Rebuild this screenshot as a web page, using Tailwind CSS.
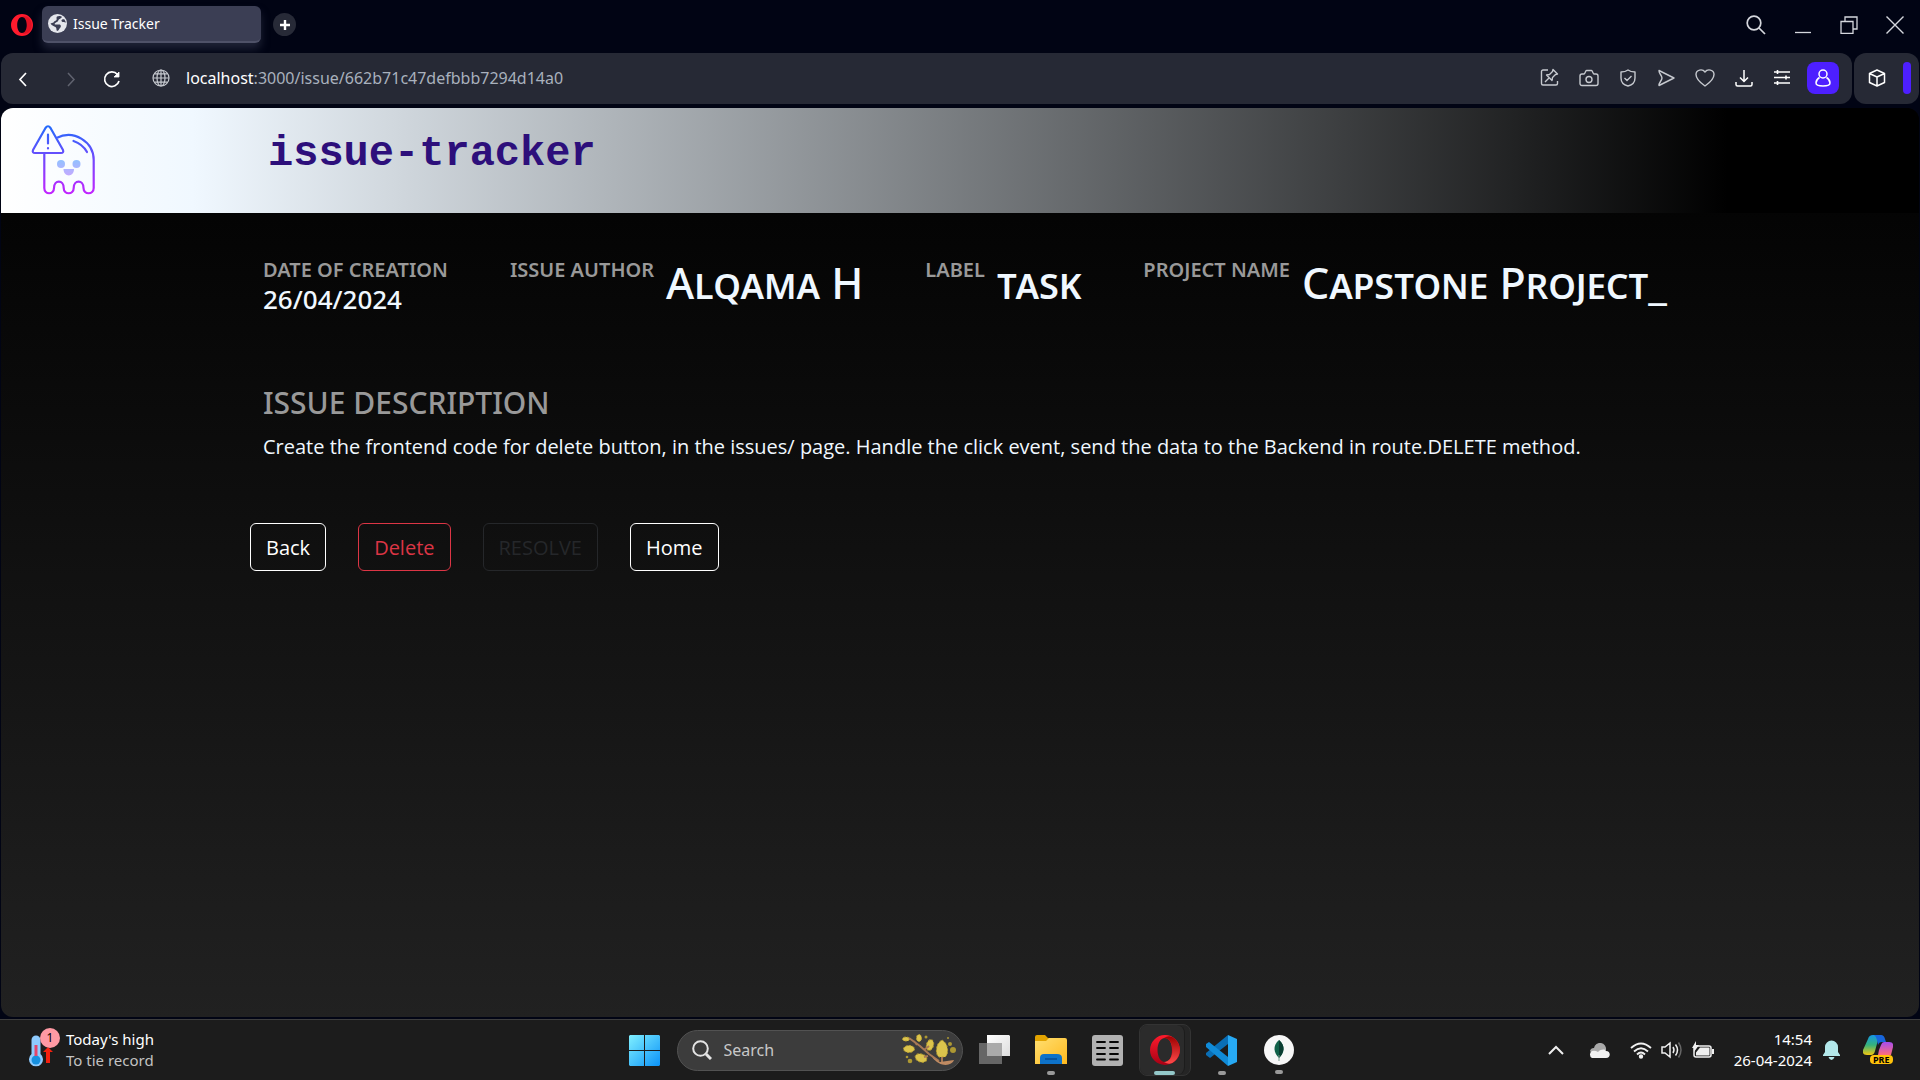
<!DOCTYPE html>
<html lang="en">
<head>
<meta charset="utf-8">
<title>Issue Tracker</title>
<script src="https://cdn.jsdelivr.net/npm/@tailwindcss/browser@4"></script>
</head>
<body class="flex h-screen flex-col overflow-hidden bg-[#010414] font-['Noto_Sans',sans-serif] text-white">

<!-- Tab strip -->
<div class="flex h-[53px] shrink-0 items-center pr-4 pb-1 pl-[11px]">
  <svg class="mr-[9px] size-[22px]" viewBox="0 0 22 22"><path fill="#ff1b2d" fill-rule="evenodd" d="M11 0a11 11 0 1 0 0 22 11 11 0 0 0 0-22Zm0 3c2.800 0 4.800 3.500 4.800 8s-2 8-4.800 8-4.800-3.500-4.800-8 2-8 4.800-8Z"/><path fill="#a70014" d="M11 3c3-2 7 0 8.500 3a11 11 0 0 1 0 10c-1.500 3-5.500 5-8.500 3 2.800 0 4.800-3.500 4.800-8s-2-8-4.800-8Z" opacity=".35"/></svg>
  <div class="flex h-[37px] w-[219px] items-center gap-1.5 rounded-md border-b-2 border-[#4f5268] bg-[#3b3e54] px-1.5 shadow-[0_6px_8px_#3b3e5488]">
    <svg class="size-[19px]" viewBox="0 0 19 19"><circle cx="9.500" cy="9.500" r="9.500" fill="#e4e6ec"/><path fill="#3b3e54" d="M9 2.500c2-1 4-.5 5 .5-1 2-3 1.500-3.500 3S9 8 8 8.500 6 10 7 10.500h4c2 0 2.500 2 1 3.500s-1 2.500-3 3c-1-1 0-3-1.500-4S4 12 2.500 9.500l3-1C6 7 8 7 8.500 6S8 3.500 9 2.500zM18 8.500c-2-.5-4 0-4.500-1.500s2-2 3-1.500z"/></svg>
    <span class="text-sm">Issue Tracker</span>
  </div>
  <button class="ml-3 grid size-[23px] place-items-center rounded-full bg-[#272a37]" aria-label="New tab"><svg class="size-3" viewBox="0 0 12 12"><path stroke="#fff" stroke-width="2.400" d="M6 1v10M1 6h10"/></svg></button>
  <div class="ml-auto flex items-center gap-7 text-[#d5d7dd]">
    <button aria-label="Search tabs"><svg class="size-5" viewBox="0 0 20 20" fill="none" stroke="currentColor" stroke-width="1.700"><circle cx="8" cy="8" r="6.800"/><path d="m13 13 6 6"/></svg></button>
    <button aria-label="Minimize"><svg class="h-5 w-[18px]" viewBox="0 0 18 20"><path stroke="currentColor" d="M1 17.500h16" stroke-width="1.300"/></svg></button>
    <button aria-label="Restore"><svg class="size-[18px]" viewBox="0 0 18 18" fill="none" stroke="currentColor" stroke-width="1.300"><path d="M1 5.500h12v12H1zM5 5V1h12v12h-4"/></svg></button>
    <button aria-label="Close"><svg class="size-[18px]" viewBox="0 0 18 18"><path stroke="currentColor" stroke-width="1.400" d="m.5.5 17 17m0-17-17 17"/></svg></button>
  </div>
</div>

<!-- Address bar -->
<div class="flex h-[51px] shrink-0 gap-0.5 px-px text-[#c6c9cf]">
  <div class="flex flex-1 items-center rounded-xl bg-[#262935] pr-[13px] pb-0.5 pl-[13px]">
    <div class="flex items-center gap-6 pt-0.5 text-white">
      <button aria-label="Back"><svg class="size-5" viewBox="0 0 20 20" fill="none" stroke="currentColor" stroke-width="1.700"><path d="m12 4-6 6.500 6 6.500"/></svg></button>
      <button aria-label="Forward" class="text-[#60636f]"><svg class="size-5" viewBox="0 0 20 20" fill="none" stroke="currentColor" stroke-width="1.500"><path d="m10 4 6 6.500-6 6.500"/></svg></button>
      <button aria-label="Reload"><svg class="size-5" viewBox="0 0 20 20" fill="none" stroke="currentColor" stroke-width="1.700"><path d="M15.500 5.500a7.300 7.300 0 1 0 1.500 6.500"/><path fill="currentColor" d="M17 3v5h-5z" stroke-width=".8"/></svg></button>
    </div>
    <svg class="ml-[30px] size-[18px]" viewBox="0 0 18 18" fill="none" stroke="currentColor" stroke-width="1.200"><circle cx="9" cy="9" r="8"/><ellipse cx="9" cy="9" rx="4" ry="8"/><path d="M1 9h16M9 1v16M2.500 4.800h13M2.500 13.200h13"/></svg>
    <a href="#" class="ml-4 text-[#a9b1bd]"><span class="text-white">localhost</span>:3000/issue/662b71c47defbbb7294d14a0</a>
    <div class="ml-auto flex items-center gap-5">
      <button aria-label="Edit page"><svg class="size-[19px]" viewBox="0 0 19 19" fill="none" stroke="currentColor" stroke-width="1.400" stroke-linejoin="round"><path d="M8 2H3a1.500 1.500 0 0 0-1.500 1.500v12A1.500 1.500 0 0 0 3 17h13a1.500 1.500 0 0 0 1.500-1.500V13M13 1.500l4.500 4.500-2 .5-3 3-.5 3-5.500-5.500 3-.5 3-3zM9 10l-4 4"/></svg></button>
      <button aria-label="Snapshot"><svg class="size-5" viewBox="0 0 20 20" fill="none" stroke="currentColor" stroke-width="1.400" stroke-linejoin="round"><path d="M1 8a2 2 0 0 1 2-2h2c1 0 1.500-3.500 2.500-3.500h5c1 0 1.500 3.500 2.500 3.500h2a2 2 0 0 1 2 2v7.500a2 2 0 0 1-2 2H3a2 2 0 0 1-2-2z"/><circle cx="10" cy="11.500" r="3"/></svg></button>
      <button aria-label="Ad blocker"><svg class="size-[18px]" viewBox="0 0 18 18" fill="none" stroke="currentColor" stroke-width="1.400" stroke-linejoin="round"><path d="M9 1c2 1.500 4.500 2 7 2v6c0 4-3 7-7 8-4-1-7-4-7-8V3c2.500 0 5-.5 7-2zM5.500 9 8 11.500 12.500 7"/></svg></button>
      <button aria-label="My Flow"><svg class="size-[18px]" viewBox="0 0 18 18" fill="none" stroke="currentColor" stroke-width="1.400" stroke-linejoin="round"><path d="M2 1.500 17 9 2 16.500c-.5-2.500 3-5 3-7.500S1.500 4 2 1.500z"/></svg></button>
      <button aria-label="Bookmark"><svg class="size-5" viewBox="0 0 20 20" fill="none" stroke="currentColor" stroke-width="1.400" stroke-linejoin="round"><path d="M10 18C5 14.500 1 11 1 6.500 1 1.500 7.500.5 10 4c2.500-3.500 9-2.500 9 2.500 0 4.500-4 8-9 11.500z"/></svg></button>
      <button aria-label="Downloads" class="text-white"><svg class="size-[18px]" viewBox="0 0 18 18" fill="none" stroke="currentColor" stroke-width="1.500"><path d="M9 1v11M5 8.500l4 4 4-4M1 13v2.500A1.500 1.500 0 0 0 2.500 17h13a1.500 1.500 0 0 0 1.500-1.500V13"/></svg></button>
      <button aria-label="Easy setup" class="text-white"><svg class="size-[18px]" viewBox="0 0 18 18" fill="none" stroke="currentColor" stroke-width="1.600"><path d="M1 3h16M1 8.500h16M1 14h16M4.500 1v4M13 6.500v4M4.500 12v4"/></svg></button>
      <button aria-label="Profile" class="-ml-1 grid size-8 place-items-center rounded-lg bg-[#4d1fff] text-white"><svg class="size-[18px]" viewBox="0 0 18 18" fill="none" stroke="currentColor" stroke-width="1.500"><circle cx="9" cy="5" r="4"/><path d="M5.500 8.500C3 10 2 12 2 14c0 2 2 3 7 3s7-1 7-3c0-2-1-4-3.500-5.500"/></svg></button>
    </div>
  </div>
  <div class="flex w-[65px] items-center justify-between rounded-xl bg-[#262935] pr-2 pb-0.5 pl-3.5 text-white">
    <button aria-label="Extensions"><svg class="size-[18px]" viewBox="0 0 18 18" fill="none" stroke="currentColor" stroke-width="1.500" stroke-linejoin="round"><path d="M9 1l7.500 3.500v9L9 17l-7.500-3.500v-9zM1.500 4.500 9 8l7.500-3.500M9 8v9"/></svg></button>
    <span class="h-8 w-2 rounded-full bg-[#4d1fff]"></span>
  </div>
</div>

<!-- Web page -->
<div class="mx-px mt-1 mb-0.5 flex min-h-0 flex-1 flex-col overflow-hidden rounded-xl bg-linear-to-b/srgb from-black to-[#212121]">
  <header class="flex h-[105px] shrink-0 items-start bg-linear-to-r/srgb from-white via-[#f0f8ff] via-10% to-black to-90% pl-[29px]">
    <svg class="mt-4 h-[72px] w-[66px]" viewBox="0 0 66 72" fill="none" stroke="url(#g)" stroke-width="2.200" stroke-linejoin="round" stroke-linecap="round">
      <defs><linearGradient id="g" gradientUnits="userSpaceOnUse" x1="0" y1="0" x2="0" y2="72"><stop offset="0" stop-color="#1f6dfb"/><stop offset="1" stop-color="#c822ff"/></linearGradient>
      <linearGradient id="f" gradientUnits="userSpaceOnUse" x1="0" y1="34" x2="0" y2="54"><stop offset="0" stop-color="#8cc4ff"/><stop offset="1" stop-color="#cba6ff"/></linearGradient></defs>
      <path d="M15.500 4 3 26q-1 3 2 3h26q3 0 2-3L20.500 4q-2.500-3.500-5 0zM18 10.500v9M18 24v.5M26.500 14C44 5 63.700 18 63.700 36v28c0 7-10.200 7-10.200 0 0-8.500-9.800-8.500-9.800 0 0 7-10 7-10 0 0-8.500-9.700-8.500-9.700 0 0 7-9.700 7-9.700 0V30M43.500 17q9 3 13.500 11"/>
      <g fill="url(#f)" stroke="none"><circle cx="31" cy="40" r="4"/><circle cx="46.500" cy="40" r="4"/><path d="M33.500 45h10.500c0 8.500-10.500 8.500-10.500 0z"/></g>
    </svg>
    <h1 class="ml-[172px] pt-[22px] font-['Courier_New','Liberation_Mono',monospace] text-[42px] leading-[48px] font-bold text-[#2d0f7b]">issue-tracker</h1>
  </header>

  <main class="pt-10 pl-[249px]">
    <dl class="flex h-28 items-start gap-[62px] pl-[13px] font-medium text-[#f0f8ff]">
      <div>
        <dt class="text-xl leading-[34px] font-semibold text-[#999]">DATE OF CREATION</dt>
        <dd class="text-[26px] leading-6">26/04/2024</dd>
      </div>
      <div class="flex gap-3"><dt class="text-xl leading-[34px] font-semibold text-[#999]">ISSUE AUTHOR</dt><dd class="text-[43px] leading-[60px] [font-variant-caps:small-caps]">Alqama H</dd></div>
      <div class="flex gap-3"><dt class="text-xl leading-[34px] font-semibold text-[#999]">LABEL</dt><dd class="text-[43px] leading-[60px] [font-variant-caps:small-caps]">task</dd></div>
      <div class="flex gap-3"><dt class="text-xl leading-[34px] font-semibold text-[#999]">PROJECT NAME</dt><dd class="text-[43px] leading-[60px] [font-variant-caps:small-caps]">Capstone Project_</dd></div>
    </dl>
    <section class="pt-[18px] pl-[13px]">
      <h2 class="text-3xl leading-10 font-medium text-[#999]">ISSUE DESCRIPTION</h2>
      <p class="pt-1.5 font-['Open_Sans',sans-serif] text-xl leading-9 text-[#f0f8ff]">Create the frontend code for delete button, in the issues/ page. Handle the click event, send the data to the Backend in route.DELETE method.</p>
    </section>
    <div class="flex gap-8 pt-[58px] font-['Open_Sans',sans-serif] text-xl">
      <button class="h-12 rounded-md border border-white px-[15px] pt-0.5">Back</button>
      <button class="h-12 rounded-md border border-[#dc3545] px-[15px] pt-0.5 text-[#dc3545]">Delete</button>
      <button class="h-12 rounded-md border border-[#25272a] px-[15px] pt-0.5 text-[#25272a]" disabled>RESOLVE</button>
      <button class="h-12 rounded-md border border-white px-[15px] pt-0.5">Home</button>
    </div>
  </main>
</div>

<!-- Taskbar -->
<footer class="grid h-[61px] shrink-0 grid-cols-[1fr_auto_1fr] items-center border-t border-[#3e3e3e] bg-[#1c1c1c]">
  <div class="flex items-center gap-1.5 pl-7">
    <div class="relative h-9 w-8">
      <svg class="size-full" viewBox="0 0 32 36"><path fill="#8ecbff" d="M3.500 8a4.500 4.500 0 0 1 9 0v14a7 7 0 1 1-9 0z"/><circle cx="8" cy="28" r="4.500" fill="#1690e0"/><path stroke="#e2456b" stroke-width="3" d="M8 13v11"/><path fill="#f3200f" d="M18 31V20h-3l5-5 5 5h-3v11z"/></svg>
      <span class="absolute -top-1 left-3 grid size-5 place-items-center rounded-full bg-[#ff99a4] text-xs text-black">1</span>
    </div>
    <div class="text-[15px] leading-[21px]"><div>Today's high</div><div class="text-[#c3c3c3]">To tie record</div></div>
  </div>
  <nav class="flex h-[60px] items-center pl-0.5">
    <button aria-label="Start" class="mr-[17px]"><svg class="size-[31px]" viewBox="0 0 31 31"><defs><linearGradient id="w" x2="1" y2="1" gradientUnits="userSpaceOnUse" x1="0" y1="0" gradientTransform="scale(31)"><stop stop-color="#80f0ff"/><stop offset="1" stop-color="#0b93f8"/></linearGradient></defs><path fill="url(#w)" d="M1 0h14v15H0V1zM16 0h14l1 1v14H16zM0 16h15v15H1l-1-1zM16 16h15v14l-1 1H16z"/></svg></button>
    <label class="flex h-[41px] w-[286px] items-center rounded-full border border-[#525252] bg-[#3c3c3c] pr-1.5 pl-3.5">
      <svg class="size-5 shrink-0" viewBox="0 0 20 20" fill="none" stroke="#e4e4e4" stroke-width="2"><circle cx="8.500" cy="8.500" r="7.300"/><path stroke-width="3" d="m14 14 5 5"/></svg>
      <input type="search" aria-label="Search" placeholder="Search" class="ml-3 w-0 flex-1 bg-transparent text-base placeholder:text-[#c8c8c8]">
      <svg class="h-8 w-[54px]" viewBox="0 0 54 32"><g fill="#dcc44c" stroke="#b89f2e" stroke-width="1" stroke-dasharray="2 1.500"><ellipse cx="4" cy="5" rx="3.500" ry="2"/><ellipse cx="17" cy="4" rx="2.500" ry="3.500"/><ellipse cx="7" cy="15" rx="5.500" ry="3.500"/><ellipse cx="28" cy="11" rx="3.500" ry="5.500" transform="rotate(15 28 11)"/><ellipse cx="19" cy="24" rx="6" ry="4" transform="rotate(20 19 24)"/><path d="M40 6q5 3 5.500 9t-2.500 8h-6q-3-2-2.500-8T40 6z"/></g><path fill="none" stroke="#a87955" stroke-width="2" d="M7 4l11 8 9 8 10 7M12 7l3 4M22 16l5-4M40 28v-5M26 22l-4 1"/><path fill="#c08b62" d="m30 23 8 5 14-2c-2 6-14 8-22-3z"/><g fill="#ad9833"><circle cx="51" cy="16" r="3"/><circle cx="48" cy="10" r="2"/><circle cx="8" cy="27" r="2.300"/><circle cx="24" cy="3" r="1.500"/><circle cx="5" cy="23" r="1.300"/><circle cx="46" cy="4" r="1"/></g></svg>
    </label>
    <button aria-label="Task view" class="ml-4"><svg class="h-[30px] w-[31px]" viewBox="0 0 31 30"><defs><linearGradient id="t" x2="1" y2="1"><stop stop-color="#fff"/><stop offset="1" stop-color="#ddd"/></linearGradient></defs><path fill="url(#t)" d="M8 0h22l1 1v20H8z"/><path fill="#666" d="M0 8h23v21H0z"/><path fill="#aaa" d="M8 8h15v13H8z"/></svg></button>
    <button aria-label="File Explorer" class="relative ml-[25px]"><svg class="h-[30px] w-8" viewBox="0 0 32 30"><defs><linearGradient id="y" x2="1" y2="1"><stop stop-color="#ffdf71"/><stop offset="1" stop-color="#ffb91e"/></linearGradient></defs><path fill="#e2a300" d="M0 2q0-2 2-2h8l3 3h5v6H0z"/><path fill="url(#y)" d="M0 6h11l3-3h16q2 0 2 2v24H0z"/><path fill="#0e72c9" d="M5 29v-6q0-4 4-4h13q5 0 5 4v6z"/><path stroke="#064c94" stroke-width="1.500" d="M10 24h12"/></svg><span class="absolute top-9 left-3 h-1 w-2 rounded-full bg-[#9a9a9a]"></span></button>
    <button aria-label="Notes" class="ml-[25px]"><svg class="size-[31px]" viewBox="0 0 31 31"><rect width="31" height="31" rx="3" fill="#b1b1b1"/><path stroke="#050505" stroke-width="1.800" stroke-linecap="round" d="M5 7h8M18 7h8M5 13h8M18 13h8M5 19h8M18 19h8M5 24.500h8M18 24.500h8"/></svg></button>
    <button aria-label="Opera" class="relative ml-4 flex h-[52px] w-[52px] items-center rounded-lg border border-[#333] bg-[#252525]"><span class="flex h-full w-[45px] items-center rounded-lg border-r border-[#1c1c1c] bg-[#2b2b2b] pl-[10px]"><svg class="size-[30px]" viewBox="0 0 30 30"><defs><linearGradient id="o" x2="0" y2="1"><stop stop-color="#ff1b2d"/><stop offset="1" stop-color="#a70014"/></linearGradient><linearGradient id="p" x2="0" y2="1"><stop stop-color="#9c0000"/><stop offset="1" stop-color="#ff4b4b"/></linearGradient></defs><path fill="url(#o)" fill-rule="evenodd" d="M15 0a15 15 0 1 0 0 30 15 15 0 0 0 0-30Zm0 3c4.500 0 7 5.500 7 12s-2.500 12-7 12-7.500-5.500-7.500-12S10.500 3 15 3Z"/><path fill="url(#p)" d="M14 3q6-4 11 1a15 15 0 0 1 0 22q-5 5-11 1c5 0 8.500-5 8.500-12S19 3 14 3Z"/></svg></span><span class="absolute top-[46px] left-[14px] h-1 w-[21px] rounded-full bg-[#94c8c9]"></span></button>
    <button aria-label="Visual Studio Code" class="relative ml-[15px]"><svg class="size-[31px]" viewBox="0 0 31 31"><path fill="#0a6eb5" d="M22 0v9L4 23l-4-3v-2z"/><path fill="#108bd8" d="m0 9 3-2 19 15v9L0 12z"/><path fill="#27a9f3" d="m22 0 9 4v23l-9 4z"/></svg><span class="absolute top-9 left-3 h-1 w-2 rounded-full bg-[#9a9a9a]"></span></button>
    <button aria-label="MongoDB Compass" class="relative ml-[27px]"><svg class="size-[30px]" viewBox="0 0 30 30"><circle cx="15" cy="15" r="15" fill="#f7f7f7"/><path fill="#116149" d="M15 5c7 6 5 13 0 18-5-5-7-12 0-18z"/><path fill="#0a3d31" d="M15 5c7 6 5 13 0 18z"/><path stroke="#799c8d" d="M15 20v6"/></svg><span class="absolute top-[35px] left-[11px] h-1 w-2 rounded-full bg-[#9a9a9a]"></span></button>
  </nav>
  <div class="flex items-center justify-end pr-[27px]">
    <svg class="mr-6 h-4 w-4" viewBox="0 0 16 16" fill="none" stroke="#eee" stroke-width="2"><path d="m1 12 7-7 7 7"/></svg>
    <svg class="mr-5 h-[15px] w-[22px]" viewBox="0 0 22 15"><path fill="#a9a9a9" d="M2 8a4 4 0 0 1 4-3 6 6 0 0 1 12 2l-12 6z"/><path fill="#f0f0f0" d="M4 15a4 4 0 0 1 0-7q3-1 6 1c3-3 7-3 8-1 5 0 5 7 0 7z"/></svg>
    <svg class="mr-[9px] h-[17px] w-[22px]" viewBox="0 0 22 17" fill="none" stroke="#f0f0f0" stroke-width="1.800"><path d="M1 6q10-9 20 0M4 9.500q7-6.500 14 0M7 12.500q4-4 8 0"/><circle cx="11" cy="14.500" r="1.300" fill="#fff"/></svg>
    <svg class="mr-2.5 h-[18px] w-[21px]" viewBox="0 0 21 18" fill="none" stroke="#f0f0f0" stroke-width="1.500"><path d="M1 6h3l5-4v14l-5-4H1zM12 6q2 3 0 6M14.500 3.500q4 5.500 0 11"/><path stroke="#666" d="M17.500 1.500q5 7.500 0 15"/></svg>
    <svg class="mr-5 h-[18px] w-[22px]" viewBox="0 0 22 18"><rect x="2" y="5" width="17" height="11" rx="2" fill="none" stroke="#f0f0f0" stroke-width="1.500"/><path fill="#f0f0f0" d="M8 6.500h9.500v8H4v-3zM20 8h2v5h-2zM4 0v4h3l-5 7V7H0z"/></svg>
    <div class="mr-[11px] text-right text-[15px] leading-[21px]"><div>14:54</div><div>26-04-2024</div></div>
    <svg class="mr-[23px] h-5 w-[17px]" viewBox="0 0 17 20"><path fill="#b3e8ea" d="M2 7a6.500 6.500 0 0 1 13 0v5l2 3v1H0v-1l2-3zM5.500 17h6q-1 3-3 3t-3-3z"/></svg>
    <div class="relative h-[30px] w-[30px]">
      <svg class="size-full" viewBox="0 0 30 30"><defs><linearGradient id="c" x2="0" y2="1"><stop stop-color="#1597e5"/><stop offset=".5" stop-color="#35b27c"/><stop offset="1" stop-color="#f2c811"/></linearGradient><linearGradient id="d" x2="0" y2="1"><stop stop-color="#a54cf0"/><stop offset="1" stop-color="#ff6d79"/></linearGradient></defs><path fill="url(#c)" d="M5 4q1-4 5-4h9q-3 1-4 5l-3 11q-1 4-4 4H4q-5 0-4-5z"/><path fill="#1765dc" d="M11 0h7q3 0 4 4l1 3h-4q-3 0-4 3l-1-5q-1-4-3-5z"/><path fill="url(#d)" d="m16 15 2-5q1-3 3-3h5q5 0 4 5l-2 8H15z"/></svg>
      <span class="absolute top-5 left-[7px] rounded-sm bg-[#ffc20a] px-[3px] text-[9px] leading-[9px] font-bold text-black">PRE</span>
    </div>
  </div>
</footer>
</body>
</html>
